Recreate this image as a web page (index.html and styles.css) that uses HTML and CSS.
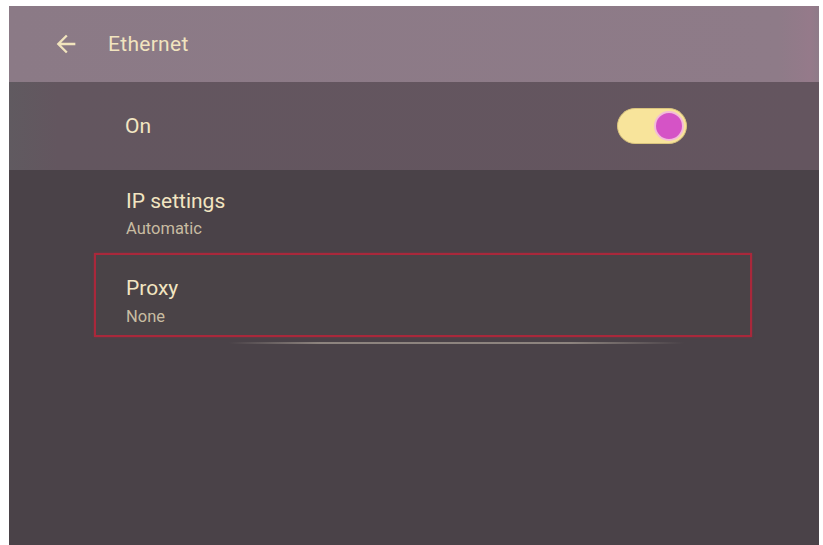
FILE: index.html
```html
<!DOCTYPE html>
<html>
<head>
<meta charset="utf-8">
<link rel="stylesheet" href="styles.css">
</head>
<body>
<div class="screen">
  <header class="topbar">
    <svg class="back" viewBox="0 0 24 24" width="28" height="28"><path d="M20 11H7.83l5.59-5.59L12 4l-8 8 8 8 1.41-1.41L7.83 13H20v-2z" fill="#f1e4bd"/></svg>
    <span class="title">Ethernet</span>
  </header>
  <div class="switch-row">
    <span class="switch-label">On</span>
    <div class="toggle"><div class="knob"></div></div>
  </div>
  <div class="list">
    <div class="item">
      <div class="item-title">IP settings</div>
      <div class="item-sub">Automatic</div>
    </div>
    <div class="item item-focused">
      <div class="item-title">Proxy</div>
      <div class="item-sub">None</div>
    </div>
    <div class="divider"></div>
  </div>
</div>
</body>
</html>
```
FILE: styles.css
```css
html, body {
  margin: 0;
  padding: 0;
  background: #ffffff;
}
body {
  font-family: Roboto, "Liberation Sans", sans-serif;
  padding: 6px 4px 0 9px;
  height: 545px;
  box-sizing: border-box;
  overflow: hidden;
}
.screen {
  width: 810px;
  height: 539px;
  background: #4a4248;
  display: flex;
  flex-direction: column;
}
.topbar {
  height: 76px;
  flex: none;
  background: linear-gradient(90deg, #8b7a86 0%, #8e7b88 95%, #957a8a 99%, #8e7b88 100%);
  display: flex;
  align-items: center;
  padding-left: 43px;
}
.back {
  display: block;
  width: 28px;
  height: 28px;
}
.title {
  margin-left: 28px;
  color: #f1e4bf;
  font-size: 21px;
  letter-spacing: 0.3px;
}
.switch-row {
  height: 88px;
  flex: none;
  background: linear-gradient(90deg, #605a60 0%, #63565f 6%, #64555f 100%);
  display: flex;
  align-items: center;
  justify-content: space-between;
  padding: 0 132px 0 116px;
}
.switch-label {
  color: #f3e6c3;
  font-size: 21px;
}
.toggle {
  width: 70px;
  height: 36px;
  box-sizing: border-box;
  border-radius: 18px;
  background: #f8e49b;
  border: 1px solid #d9c47e;
  display: flex;
  align-items: center;
  justify-content: flex-end;
  padding-right: 2px;
}
.knob {
  width: 30px;
  height: 30px;
  box-sizing: border-box;
  border-radius: 50%;
  background: #d553c6;
  border: 2px solid #f3bcd8;
}
.list {
  display: flex;
  flex-direction: column;
  padding-left: 85px;
}
.item {
  width: 658px;
  height: 83px;
  box-sizing: border-box;
  border: 2px solid transparent;
  padding: 17px 30px 0 30px;
}
.item-focused {
  height: 84px;
  padding-top: 21px;
  border-color: #a9283b;
  box-shadow: 0 0 2px rgba(169, 40, 59, 0.6);
  background: #4a4347;
}
.item-title {
  color: #f2e5c1;
  font-size: 21px;
  line-height: 24px;
}
.item-sub {
  margin-top: 7px;
  color: #c8bca2;
  font-size: 16.5px;
  line-height: 18px;
}
.item-focused .item-sub {
  margin-top: 8px;
}
.divider {
  margin: 5px 0 0 135px;
  width: 455px;
  height: 2px;
  background: linear-gradient(90deg, rgba(160,150,140,0) 0%, rgba(170,160,150,0.7) 20%, rgba(170,160,150,0.7) 75%, rgba(160,150,140,0) 100%);
}
```
